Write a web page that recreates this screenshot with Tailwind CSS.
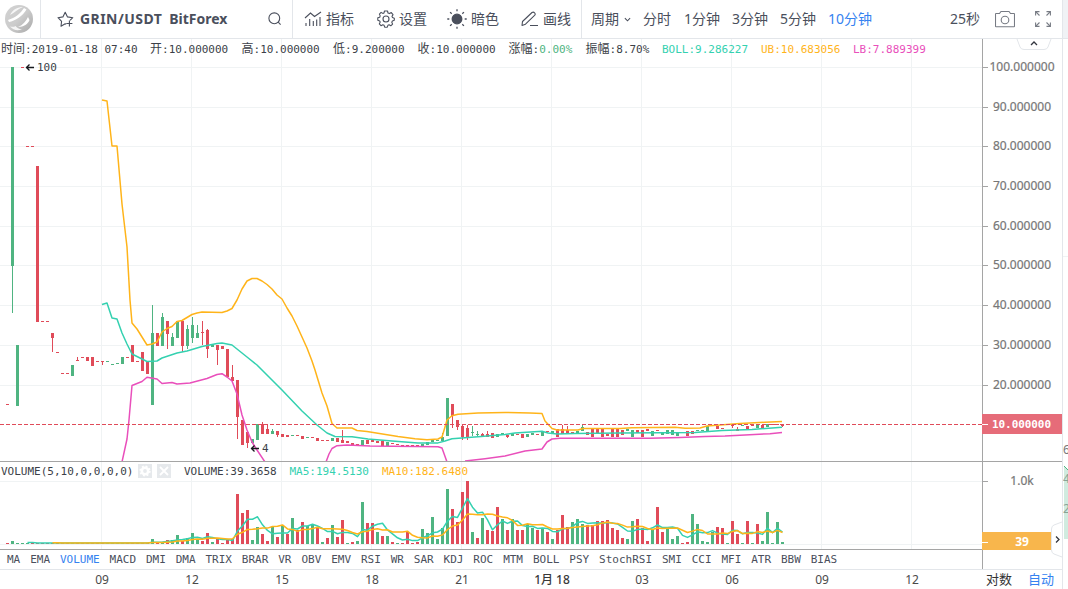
<!DOCTYPE html>
<html lang="zh-CN">
<head>
    <meta charset="UTF-8">
    <meta name="viewport" content="width=device-width, initial-scale=1.0">
    <title>GRIN/USDT BitForex</title>
    <script src="https://cdn.jsdelivr.net/npm/@tailwindcss/browser@4"></script>
</head>
<body class="w-[1068px] h-[589px] overflow-hidden bg-white flex font-['Noto_Sans','Noto_Sans_CJK_SC',sans-serif] text-[#4a4f5c]">

    <div class="w-[1062px] shrink-0 flex flex-col">

        <!-- Toolbar -->
        <header class="h-[39px] shrink-0 border-b border-[#e3e6ea] flex text-[14px] leading-[38px]">
            <div class="w-[41px] border-r border-[#e3e6ea] pl-[5px] flex items-center">
                <svg class="size-7" viewBox="0 0 28 28">
                    <defs>
                        <linearGradient id="logo" x1="0" y1="0" x2="1" y2="1">
                            <stop offset="0" stop-color="#d2d2d2"/>
                            <stop offset="0.5" stop-color="#cccccc"/>
                            <stop offset="1" stop-color="#a8a8a8"/>
                        </linearGradient>
                    </defs>
                    <circle cx="14" cy="14" r="14" fill="url(#logo)"/>
                    <path d="M5 10C8 4 13 2 18 2C13 4 9 8 5 10Z" fill="#f6f6f6"/>
                    <path d="M3 15C10 13 16 8 19 3L21.5 4.5C18 11 10 16 4 17Z" fill="#fff"/>
                    <path d="M13 22C18 20 21 16 23 12L24.5 15C23 19 19 22 13 22Z" fill="#fff"/>
                    <path d="M5 21.5C7 22 9 22 10.5 21C12 23 14 24 17 24.5C12 26 8 25 5 21.5Z" fill="#f4f4f4"/>
                </svg>
            </div>
            <div class="w-[252px] border-r border-[#e3e6ea] pl-4 flex items-center">
                <svg class="size-[17px] mr-1.5" viewBox="0 0 17 17" fill="none" stroke="#4a4f5c" stroke-width="1.1" stroke-linejoin="round">
                    <path d="M9.2 13.3L8.2 12.8L4 15.2L4.6 10.3L1 6.7L5.9 5.9L8.2 1.3L10.5 5.9L15.8 6.7L13 9.3M9.4 12.5H15.4M12.4 9.5V15.5"/>
                </svg>
                <h1 class="text-[14px] font-bold w-[188px] flex gap-[7px]"><span class="tracking-[0.45px]">GRIN/USDT</span><span>BitForex</span></h1>
                <svg class="size-[14px]" viewBox="0 0 14 14" fill="none" stroke="#4a4f5c" stroke-width="1.1">
                    <circle cx="6.3" cy="6.3" r="5.4"/>
                    <path d="M10.2 10.2L12.6 12.6"/>
                </svg>
            </div>
            <div class="w-[289px] border-r border-[#e3e6ea] pl-[11px] flex items-center">
                <div class="w-[73px] flex items-center">
                    <svg class="w-[18px] h-4 mr-1" viewBox="0 0 18 16" fill="none" stroke="#4a4f5c" stroke-width="1.1">
                        <path d="M1 7L6.5 2L10.5 5.5L17 1M2 15V12M5.7 15V8M9.3 15V10M12.7 15V8.5M16 15V6"/>
                    </svg>
                    <span>指标</span>
                </div>
                <div class="w-[70px] flex items-center">
                    <svg class="size-[18px] mr-1" viewBox="0 0 18 18" fill="none" stroke="#4a4f5c" stroke-width="1.1" stroke-linejoin="round">
                        <path d="M7.5 1H10.5L11 3L12.5 3.6L14.3 2.6L16 4.7L15 6.4L15.5 7.6L17.3 8.3V10.3L15.4 10.9L14.8 12.2L15.6 14.1L13.8 15.8L12.1 14.8L10.9 15.3L10.3 17.2H7.7L7.1 15.3L5.8 14.8L4 15.7L2.3 13.9L3.2 12.1L2.7 10.9L.8 10.2V7.8L2.7 7.2L3.2 5.9L2.4 4.1L4.1 2.4L5.8 3.4L7 2.9Z"/>
                        <circle cx="9" cy="9" r="3"/>
                    </svg>
                    <span>设置</span>
                </div>
                <div class="w-[74px] flex items-center">
                    <svg class="size-5 mr-1" viewBox="0 0 20 20" stroke="#4a4f5c" stroke-width="1.3">
                        <circle cx="10" cy="10" r="4.8" fill="#4a4f5c"/>
                        <path d="M10 .3V2.3M10 17.7V19.7M.3 10H2.3M17.7 10H19.7M3.1 3.1L4.7 4.7M15.3 15.3L16.9 16.9M3.1 16.9L4.7 15.3M15.3 4.7L16.9 3.1"/>
                    </svg>
                    <span>暗色</span>
                </div>
                <div class="flex items-center">
                    <svg class="w-[18px] h-4 mr-1" viewBox="0 0 18 16" fill="none" stroke="#4a4f5c" stroke-width="1.1" stroke-linejoin="round">
                        <path d="M1.5 10.5L11 1.5Q12.5 .5 13.7 2T13.3 4.6L4.5 13.2L1 14.4ZM9 14.5H17"/>
                    </svg>
                    <span>画线</span>
                </div>
            </div>
            <nav class="flex items-center gap-[12px] pl-[9px]">
                <span class="flex items-center gap-[5px]">周期
                    <svg class="w-[7px] h-[5px]" viewBox="0 0 8 5" fill="none" stroke="#4a4f5c" stroke-width="1.2"><path d="M1 1L4 4L7 1"/></svg>
                </span>
                <span>分时</span>
                <span class="ml-px">1分钟</span>
                <span>3分钟</span>
                <span>5分钟</span>
                <span class="text-[#3582f0]">10分钟</span>
            </nav>
            <div class="ml-auto flex items-center pr-[11px]">
                <span class="mr-[15px]">25秒</span>
                <svg class="w-5 h-[18px] mr-5" viewBox="0 0 20 18" fill="none" stroke="#777b84" stroke-width="1.1">
                    <path d="M1 3.5H4.5L6 1.5H14L15.5 3.5H19Q19.5 3.5 19.5 4.2V16Q19.5 16.7 19 16.7H1Q.5 16.7 .5 16V4.2Q.5 3.5 1 3.5Z"/>
                    <circle cx="10" cy="10" r="3.8"/>
                </svg>
                <svg class="size-4" viewBox="0 0 16 16" fill="none" stroke="#777b84" stroke-width="1.1">
                    <path d="M.6 4.5V.6H4.5M11.5 .6H15.4V4.5M15.4 11.5V15.4H11.5M4.5 15.4H.6V11.5M.6 .6L4.5 4.5M15.4 .6L11.5 4.5M15.4 15.4L11.5 11.5M.6 15.4L4.5 11.5"/>
                </svg>
            </div>
        </header>

        <!-- Price and volume canvas, drawn in window coordinates -->
        <div class="relative h-[511px] shrink-0">
            <svg id="chart" class="block w-[1062px] h-[511px]" viewBox="0 39 1062 511">
                <defs>
                    <clipPath id="main"><rect x="0" y="39" width="982" height="422"/></clipPath>
                </defs>
                <g id="grid" stroke="#f0f3f4" shape-rendering="crispEdges"></g>
                <g id="candles" shape-rendering="crispEdges"></g>
                <g id="volumes" shape-rendering="crispEdges"></g>
                <g fill="none" stroke-width="1.5" stroke-linejoin="round" clip-path="url(#main)">
                    <polyline stroke="#ffb41a" points="102,100 107,101 112,146 117,146 122,204 127,247 130,300 132,323 137,329 142,337 147,345 152,344 157,342 162,332 167,328.5 172,326.5 177,321.5 182,320.5 187,317.5 192,314.5 197,313 202,312 222,312.5 227,311 232,308.5 237,300 242,289 247,281 252,278.5 257,278.5 262,281 267,284.5 272,289 277,295 282,299 287,308 292,316 297,326 302,337 307,348 312,361 315,370 322,393 327,406 332,423.5 337,428 352,428 357,430.5 367,431.5 398,436.5 415,438.7 427,439.7 438,439 442,437 445,427 447,420 452,415.7 458,414.3 478,413 505,412.5 530,413 542,413.5 545,421 552,428.5 557,430 578,430 583,428.5 620,428.5 632,427.7 675,427.3 685,428.3 700,428 707,426 720,425 740,423.5 765,422.3 782,421.5"/>
                    <polyline stroke="#34d1b0" points="102,304.5 107,303 112,318 117,319 122,333 127,344 132,354 140,358 147,361.5 157,361 162,358 177,353 187,351 202,346.5 217,343.5 222,343 232,345 247,357 257,365 270,378 282,390 302,411 317,425 327,433 335,436.5 352,436.7 368,439 392,441 418,442.9 438,442.9 445,441 452,438.8 478,436.8 505,434.5 515,433 542,431.3 548,433 557,434 575,433.5 620,433 695,432.5 722,430.5 752,429.5 782,427.2"/>
                    <polyline stroke="#e94fbb" points="122,462 127,439 129,420 132,385.5 142,381.5 147,377.3 157,379 162,383.5 172,382.5 177,384 190,383 207,378.5 217,374.5 222,373.7 227,377 232,381 237,394 242,415 247,430 252,442 257,450 265,462"/>
                    <polyline stroke="#e94fbb" points="326,462 329,454 332,448.5 337,445.7 347,445 370,446 438,446.7 442,448 447,462"/>
                    <polyline stroke="#e94fbb" points="465,461 485,458.7 505,456 525,451 542,449 547,442 552,439 560,438.2 650,438.2 680,437.5 705,436.5 725,436 745,435 770,433.7 782,432.5"/>
                </g>
                <g id="averages" fill="none" stroke-width="1.5" stroke-linejoin="round"></g>
                <path d="M0 424.5H982" stroke="#e04b59" stroke-dasharray="4 2" shape-rendering="crispEdges"/>
                <path d="M0 461.5H1062M0 549.5H982M982.5 39V550" stroke="#a5a5a5" shape-rendering="crispEdges"/>

                <!-- Info rows -->
                <g class="font-['DejaVu_Sans_Mono','Noto_Sans_CJK_SC',monospace] text-[11px]" fill="#3c3f48">
                    <text x="1" y="53"><tspan class="text-[12px]">时间</tspan>:2019-01-18 07:40</text>
                    <text x="150" y="53"><tspan class="text-[12px]">开</tspan>:10.000000</text>
                    <text x="241.5" y="53"><tspan class="text-[12px]">高</tspan>:10.000000</text>
                    <text x="333" y="53"><tspan class="text-[12px]">低</tspan>:9.200000</text>
                    <text x="417.5" y="53"><tspan class="text-[12px]">收</tspan>:10.000000</text>
                    <text x="508.5" y="53"><tspan class="text-[12px]">涨幅</tspan>:<tspan fill="#4fb481">0.00%</tspan></text>
                    <text x="585.5" y="53"><tspan class="text-[12px]">振幅</tspan>:8.70%</text>
                    <text x="662" y="53" fill="#34d1b0">BOLL:9.286227</text>
                    <text x="761" y="53" fill="#ffb41a">UB:10.683056</text>
                    <text x="853" y="53" fill="#e94fbb">LB:7.889399</text>
                    <text x="37" y="71">100</text>
                    <text x="262" y="452">4</text>
                    <text x="1" y="475">VOLUME(5,10,0,0,0,0)</text>
                    <text x="184" y="475">VOLUME:39.3658</text>
                    <text x="289.5" y="475" fill="#34d1b0">MA5:194.5130</text>
                    <text x="382" y="475" fill="#ffb41a">MA10:182.6480</text>
                </g>
                <path d="M26 67.5H34M29.5 64.5L26.5 67.5L29.5 70.5M251 448.5H259M254.5 445.5L251.5 448.5L254.5 451.5" fill="none" stroke="#16181d" stroke-width="1.3"/>
                <g fill="#e6e9ec">
                    <rect x="138" y="464" width="14" height="14"/>
                    <rect x="157" y="464" width="14" height="14"/>
                </g>
                <circle cx="145" cy="471" r="3.2" fill="none" stroke="#fff" stroke-width="2.6"/>
                <circle cx="145" cy="471" r="4.8" fill="none" stroke="#fff" stroke-width="1.6" stroke-dasharray="1.9 1.87"/>
                <path d="M160 467L168 475M168 467L160 475" stroke="#fff" stroke-width="1.8"/>

                <!-- Price axis -->
                <g id="prices" class="text-[12px]" fill="#777" stroke="#777" stroke-width="0.2" text-anchor="middle"></g>
                <g shape-rendering="crispEdges">
                    <rect x="982" y="414" width="80" height="20" fill="#e66c79"/>
                    <rect x="982" y="532" width="69" height="20" fill="#f8b64c"/>
                    <path d="M982 424.5H988M982 542.5H988" stroke="#fff"/>
                </g>
                <text x="1021.5" y="428" text-anchor="middle" fill="#fff" class="font-['DejaVu_Sans_Mono',monospace] text-[11px] font-bold" textLength="59">10.000000</text>
                <text x="1022" y="546" text-anchor="middle" fill="#fff" class="text-[12px] font-bold">39</text>
            </svg>

            <!-- Collapse tabs -->
            <svg class="absolute top-0 left-[1016px] w-9 h-3" viewBox="0 0 36 12" fill="#fff" stroke="#e3e6ea">
                <path d="M1 0L4 8Q5 10.5 8 10.5H28Q31 10.5 32 8L35 0"/>
                <path d="M15 6L18 3L21 6" fill="none" stroke="#33363f" stroke-width="1.3"/>
            </svg>
            <svg class="absolute top-[484px] left-[1050px] w-3 h-9 overflow-visible" viewBox="0 0 12 36" fill="#fff" stroke="#e3e6ea">
                <path d="M12 -1L4 2Q1.5 3 1.5 6V27Q1.5 30 4 31L12 34"/>
                <path d="M6 13.5L9 16.5L6 19.5" fill="none" stroke="#33363f" stroke-width="1.3"/>
            </svg>
        </div>

        <!-- Indicator tabs -->
        <div class="h-5 shrink-0 flex border-b border-[#e3e6ea]">
            <div class="w-[983px] border-r border-[#a5a5a5] pl-[7px] flex items-center gap-[9.9px] font-['DejaVu_Sans_Mono',monospace] text-[11px] leading-[18px]">
                <span>MA</span><span>EMA</span><span class="text-[#3582f0]">VOLUME</span><span>MACD</span><span>DMI</span><span>DMA</span><span>TRIX</span><span>BRAR</span><span>VR</span><span>OBV</span><span>EMV</span><span>RSI</span><span>WR</span><span>SAR</span><span>KDJ</span><span>ROC</span><span>MTM</span><span>BOLL</span><span>PSY</span><span>StochRSI</span><span>SMI</span><span>CCI</span><span>MFI</span><span>ATR</span><span>BBW</span><span>BIAS</span>
            </div>
        </div>

        <!-- Time axis -->
        <footer class="h-[19px] shrink-0 flex text-[12px] leading-[19px] text-[#4a4a4a]">
            <div class="w-[983px] pl-[57px] flex text-center">
                <span class="w-[90px]">09</span><span class="w-[90px]">12</span><span class="w-[90px]">15</span><span class="w-[90px]">18</span><span class="w-[90px]">21</span><span class="w-[90px] font-medium text-[#3a3a3a]">1月 18</span><span class="w-[90px]">03</span><span class="w-[90px]">06</span><span class="w-[90px]">09</span><span class="w-[90px]">12</span>
            </div>
            <div class="flex gap-4 pl-[3px] text-[13px]">
                <span class="text-[#333]">对数</span>
                <span class="text-[#3582f0]">自动</span>
            </div>
        </footer>
    </div>

    <!-- Edge of the depth panel -->
    <aside class="w-1.5 shrink-0 overflow-hidden border-l border-[#e3e6ea]">
        <div class="h-[39px] bg-[#f0f2f5] border-b border-[#e3e6ea]"></div>
        <svg class="block w-[5px] h-[550px]" viewBox="1063 39 5 550">
            <path d="M1063 256.5H1068" stroke="#f0f3f4"/>
            <path d="M1064 466L1068 470V539H1064Z" fill="#d0ebdf"/>
            <path d="M1064 466L1068 470" stroke="#4fb481"/>
            <g class="text-[12px]" fill="#777">
                <text x="1063" y="454">6</text>
                <text x="1063" y="483" fill="#8aa396">4</text>
                <text x="1063" y="513" fill="#8aa396">2</text>
            </g>
        </svg>
    </aside>

    <script>
        const UP = '#4fb481';
        const DOWN = '#e04b59';
        const STEP = 5;

        // Each candle: direction, body top, body bottom, wick top, wick bottom
        const candles = `r404,405 g67,266,67,313 g345,406 r67,68 r146,147 r146,147 r166,322 r321,322 r321,322 r333,338,333,352
            r352,353 r373,374 r373,374 g365,376 r360,361,357,361 r357,358 r357,361 r357,366 r361,362 r361,362,361,365
            g361,362 g364,365 g363,364 g357,364 r357,358 r345,362 r361,362 r352,371 r361,374 g333,405,305,405
            r333,346 g317,346,313,346 r321,334,321,349 g337,346,333,346 g321,338 r321,346,321,352 g329,346,325,349 g325,338,317,343 g333,338,325,338 r332,333,321,345
            r330,349,329,358 g345,347 r345,350,345,365 r346,349 r349,377 r377,381,365,381 r380,417,380,439 r420,445 r432,443,432,448 g439,443
            g424,440 r424,434,422,434 r429,434,425,434 g431,434,429,434 r431,435,431,437 r434,437 r435,437 g435,436 r435,436 r436,439
            g437,438 r437,438 r438,441 r440,441 r440,441 g438,441 r438,442 r440,443,430,443 r441,443 r443,445
            r444,445 g440,445 r440,444 r440,442 r441,443 r441,446 g442,446 r443,444 r444,445 r445,446
            r445,446 r445,446 r445,446 g444,446 g442,445 g440,442 g440,441 g437,441,433,441 g398,436 r404,416,404,428
            r420,427,420,430 r426,437,425,440 r428,438,425,440 g432,433,426,436 g434,435,431,437 r434,436,433,437 r434,437,431,437 r433,438 g434,437 g433,435
            r435,437,435,438 g434,436 r434,435 r434,438 g434,437 g433,435 r434,435 g431,436 r431,432 g431,433
            r429,437 r429,434,425,434 r430,434,426,434 r432,434 g431,433 g427,431,425,431 r432,435 r429,437 r429,434 r429,437
            r434,436 r429,437 r429,437 r430,435 g429,431 g430,437 r430,433 r430,437 r429,431 g431,436
            r430,431 g432,435 g430,434 g430,435 g432,436 r432,433 r431,436 r431,434 g430,431 g430,431
            g426,431 r425,426 r426,429 r428,429 r424,425 r424,426,424,428 r429,431,427,431 g425,426 r426,430 r425,426
            g425,428 r425,428 g424,427 r424,425 r424,425 r424,426,424,427`.split(/\s+/);

        // Bar heights in the volume pane
        const volumes = `r1 g3 g1 g1 g1 r1 r1 r1 r1 r1 r1 r1 r1 g1 r1 r1 r1 r1 r1 r1 g1 g1 g1 g1 r1 r1 r1 r1 r1 g5
            r1 g2 r4 g4 g9 r3 g6 g11 g5 r3 r11 g2 r5 r1 r4 r5 r50 r31 r34 g4 g17 r10 r3 g17 r7 g18 r10 g26 r14 r22
            g18 g19 r17 g2 r6 g19 r7 r24 g1 r2 g3 g42 r21 r21 g12 r8 g8 r2 g1 r1 r12 r1 r2 g15 g11 g27 g5 g16 g55 r35
            r22 r52 r63 g12 r6 g26 r14 r13 r37 g25 r14 g25 r14 r14 g20 g16 r14 g16 r12 g5 r14 r29 r17 g22 g25 g20 r19 r19 r23 r23
            r24 r16 r14 r6 g5 g23 r25 r16 r3 g14 r37 r12 g17 g5 g8 r1 r2 g30 g20 g3 g2 g12 r17 r16 g1 r23 r10 g1 r23 g1
            r20 g3 g32 g1 g22 g2`.split(/\s+/);

        const color = (item) => item[0] === 'g' ? UP : DOWN;
        const rect = (x, y, w, h, fill) => `<rect x="${x}" y="${y}" width="${w}" height="${h}" fill="${fill}"/>`;

        // Grid
        let grid = '';
        for (let x = 101.5; x < 982; x += 90) grid += `<path d="M${x} 39V549"/>`;
        const ticks = [67, 107, 146, 186, 226, 265, 305, 345, 385];
        [...ticks, 481, 544].forEach((y) => grid += `<path d="M0 ${y + 0.5}H982"/>`);
        document.getElementById('grid').innerHTML = grid;

        // Price labels
        let prices = '';
        ticks.forEach((y, i) => {
            prices += `<path d="M982 ${y + 0.5}H988" stroke="#a5a5a5" stroke-width="1"/><text x="1022" y="${y + 4}">${100 - i * 10}.000000</text>`;
        });
        prices += '<path d="M982 481.5H988" stroke="#a5a5a5" stroke-width="1"/><text x="1022" y="485">1.0k</text>';
        document.getElementById('prices').innerHTML = prices;

        document.getElementById('candles').innerHTML = candles.map((item, i) => {
            const [top, bottom, high = top, low = bottom] = item.slice(1).split(',').map(Number);
            const x = 6 + i * STEP;
            return rect(x + 1, high, 1, low - high, color(item)) + rect(x, top, 3, bottom - top, color(item));
        }).join('');

        document.getElementById('volumes').innerHTML = volumes.map((item, i) => {
            const h = Number(item.slice(1));
            return rect(6 + i * STEP, 544 - h, 3, h, color(item));
        }).join('');

        // Moving averages of the bars above
        const average = (n, stroke) => {
            const heights = volumes.map((item) => Number(item.slice(1)));
            const points = [];
            for (let i = n - 1; i < heights.length; i++) {
                const sum = heights.slice(i - n + 1, i + 1).reduce((a, b) => a + b, 0);
                points.push(`${7.5 + i * STEP},${(544 - sum / n).toFixed(1)}`);
            }
            return `<polyline stroke="${stroke}" points="${points.join(' ')}"/>`;
        };
        document.getElementById('averages').innerHTML = average(5, '#34d1b0') + average(10, '#ffb41a');
    </script>

</body>
</html>
